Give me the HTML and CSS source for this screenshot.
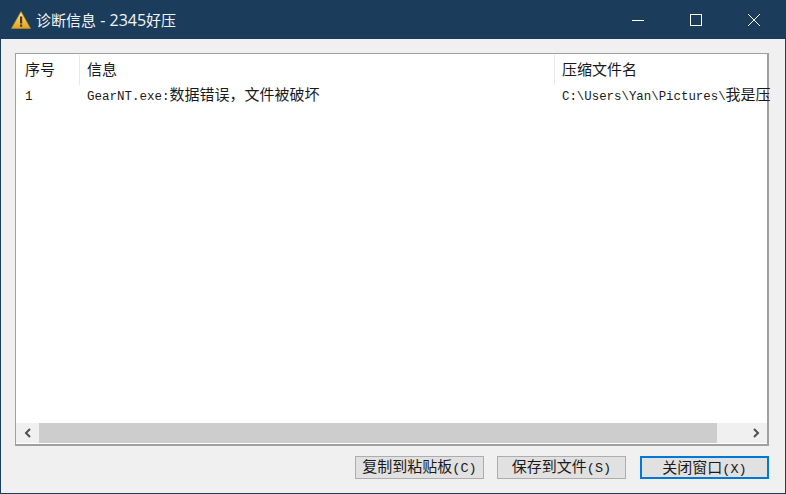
FILE: index.html
```html
<!DOCTYPE html>
<html lang="zh-CN">
<head>
  <meta charset="UTF-8">
  <title>诊断信息 - 2345好压</title>
  <link rel="stylesheet" href="styles.css">
</head>
<body>
  <div class="window">
    <div class="titlebar">
      <svg class="app-icon" width="20" height="18" viewBox="0 0 20 18">
        <defs>
          <linearGradient id="warn" x1="0" y1="0" x2="0" y2="1">
            <stop offset="0" stop-color="#ffe98a"/>
            <stop offset="1" stop-color="#e2a21c"/>
          </linearGradient>
        </defs>
        <path d="M10 .5 19.5 17.5H.5Z" fill="url(#warn)" stroke="#b8892a" stroke-width=".7"/>
        <rect x="9" y="5.5" width="2.2" height="7" fill="#4a3a1a"/>
        <rect x="9" y="13.5" width="2.2" height="2.2" fill="#4a3a1a"/>
      </svg>
      <span class="title-text">诊断信息<span class="title-latin"> - 2345</span>好压</span>
      <div class="caption-btns">
        <div class="caption-btn">
          <svg width="12" height="12" viewBox="0 0 12 12"><path d="M0 6.5H12" stroke="#fff" fill="none"/></svg>
        </div>
        <div class="caption-btn">
          <svg width="12" height="12" viewBox="0 0 12 12"><rect x=".5" y=".5" width="11" height="11" stroke="#fff" fill="none"/></svg>
        </div>
        <div class="caption-btn">
          <svg width="12" height="12" viewBox="0 0 12 12"><path d="M0 0 12 12M12 0 0 12" stroke="#fff" fill="none"/></svg>
        </div>
      </div>
    </div>
    <div class="content">
      <div class="listbox">
        <div class="list-view">
          <div class="list-row list-head">
            <div class="col col-num">序号</div>
            <div class="col col-info">信息</div>
            <div class="col col-file">压缩文件名</div>
          </div>
          <div class="list-row list-item">
            <div class="col col-num"><span class="mono">1</span></div>
            <div class="col col-info"><span class="mono">GearNT.exe:</span>数据错误，文件被破坏</div>
            <div class="col col-file"><span class="mono">C:\Users\Yan\Pictures\</span>我是压</div>
          </div>
        </div>
        <div class="scrollbar">
          <div class="arrow">
            <svg width="10" height="10" viewBox="0 0 10 10"><path d="M7 1 3 5l4 4" stroke="#505050" stroke-width="2" fill="none"/></svg>
          </div>
          <div class="track"><div class="thumb"></div></div>
          <div class="arrow">
            <svg width="10" height="10" viewBox="0 0 10 10"><path d="M3 1l4 4-4 4" stroke="#505050" stroke-width="2" fill="none"/></svg>
          </div>
        </div>
      </div>
      <div class="actions">
        <button class="btn">复制到粘贴板<span class="mono">(C)</span></button>
        <button class="btn">保存到文件<span class="mono">(S)</span></button>
        <button class="btn btn-default">关闭窗口<span class="mono">(X)</span></button>
      </div>
    </div>
  </div>
</body>
</html>
```

FILE: styles.css
```css
html, body {
  height: 100%;
  margin: 0;
  overflow: hidden;
}
body {
  font-family: "Noto Sans CJK SC", "Liberation Sans", sans-serif;
  color: #1a1a1a;
}
.window {
  width: 786px;
  height: 494px;
  box-sizing: border-box;
  display: flex;
  flex-direction: column;
  background: #f0f0f0;
  border: 1px solid #1b3c5b;
  border-top: 0;
}
.titlebar {
  height: 39px;
  flex: none;
  display: flex;
  align-items: center;
  background: #1b3c5b;
  color: #fff;
  padding-left: 10px;
}
.app-icon { flex: none; }
.title-text {
  margin-left: 5px;
  font-size: 15px;
  color: #f2f5f8;
}
.title-latin {
  font-family: "Open Sans", sans-serif;
  font-size: 16px;
}
.caption-btns {
  display: flex;
  margin-left: auto;
  padding-right: 2px;
}
.caption-btn {
  width: 58px;
  height: 39px;
  display: flex;
  align-items: center;
  justify-content: center;
}
.content {
  flex: 1;
  display: flex;
  flex-direction: column;
  padding: 14px 16px 13px 14px;
  min-height: 0;
}
.listbox {
  height: 393px;
  box-sizing: border-box;
  display: flex;
  flex-direction: column;
  background: #fff;
  border: 1px solid #a0a0a0;
  border-bottom: 2px solid #a0a0a0;
  border-right: 2px solid #a0a0a0;
  padding: 1px 0 0 1px;
}
.list-view {
  flex: 1;
}
.list-row {
  display: flex;
  white-space: nowrap;
}
.list-head {
  height: 30px;
  font-size: 15px;
  line-height: 28px;
}
.list-head .col {
  border-right: 1px solid #e8e8e8;
}
.list-head .col-file { border-right: 0; }
.list-item {
  height: 20px;
  font-size: 15px;
  line-height: 18px;
}
.col {
  flex: none;
  box-sizing: border-box;
  padding-left: 7px;
}
.col-num {
  width: 63px;
  padding-left: 8px;
}
.col-info { width: 475px; }
.col-file { width: 217px; }
.mono {
  font-family: "Liberation Mono", monospace;
  font-size: 12.5px;
}
.col-file .mono { font-size: 12.4px; }
.scrollbar {
  height: 20px;
  flex: none;
  display: flex;
  background: #f0f0f0;
  margin: 0 0 1px -1px;
}
.arrow {
  width: 23px;
  flex: none;
  display: flex;
  align-items: center;
  justify-content: center;
}
.track { flex: 1; }
.thumb {
  width: 678px;
  height: 100%;
  background: #cdcdcd;
}
.actions {
  display: flex;
  justify-content: flex-end;
  gap: 13px;
  margin-top: 10px;
}
.btn {
  width: 129px;
  height: 23px;
  box-sizing: border-box;
  padding: 0 0 4px;
  background: #e1e1e1;
  border: 1px solid #adadad;
  font-family: inherit;
  font-size: 15px;
  line-height: 17px;
  color: #1a1a1a;
}
.btn .mono { font-size: 13.5px; }
.btn-default {
  border: 2px solid #0078d7;
  margin-left: 1px;
}
```
